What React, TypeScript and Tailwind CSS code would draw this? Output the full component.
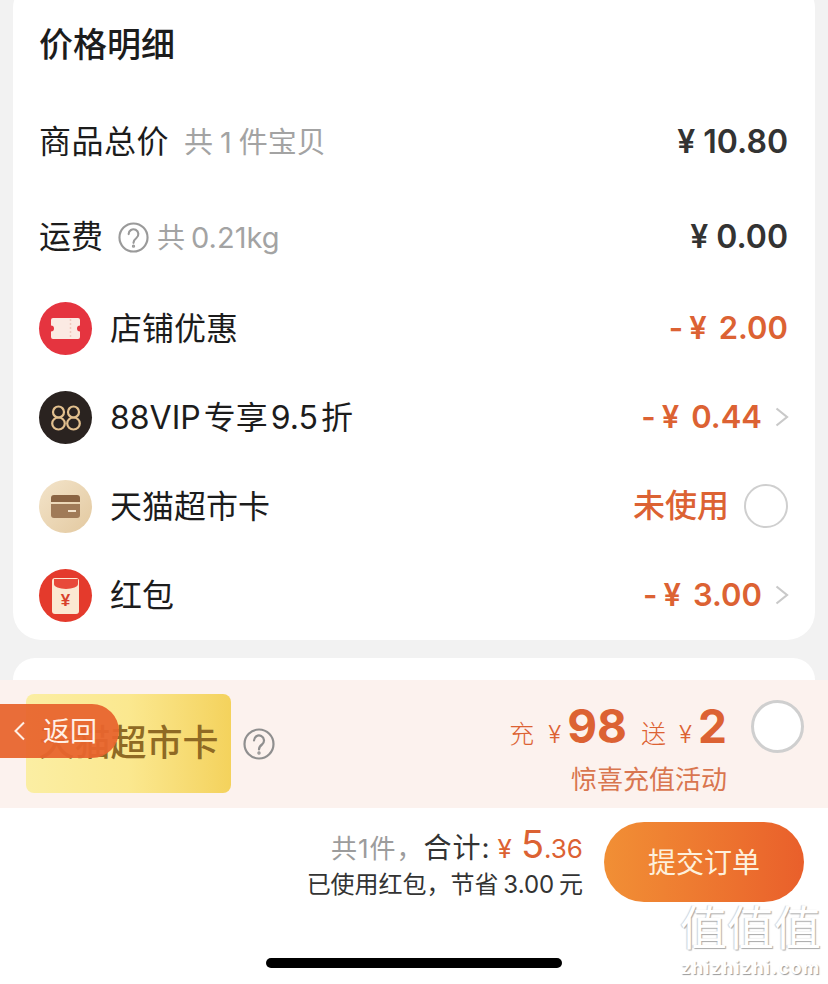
import React from 'react';

const FONT = "font-['Inter','Noto_Sans_CJK_SC',sans-serif]";

const Chevron = () => (
  <svg width="14" height="22" viewBox="0 0 14 22" fill="none" className="ml-[13px] mr-[-1px] mb-[2px]">
    <path d="M1.5 2.5 L12 11 L1.5 19.5" stroke="#c9c9c9" strokeWidth="2.2" />
  </svg>
);

const TicketIcon = () => (
  <div className="w-[53px] h-[53px] rounded-full bg-[#e5343f] flex items-center justify-center shrink-0">
    <svg width="29" height="21" viewBox="0 0 29 21">
      <path d="M2 0 H27 a2 2 0 0 1 2 2 V7.5 a3 3 0 0 0 0 6 V19 a2 2 0 0 1 -2 2 H2 a2 2 0 0 1 -2 -2 V13.500 a3 3 0 0 0 0 -6 V2 a2 2 0 0 1 2 -2 Z" fill="#fbeae3" />
      <path d="M19.500 1 V20" stroke="#efcabf" strokeWidth="1.5" strokeDasharray="2 2" />
    </svg>
  </div>
);

const VipIcon = () => (
  <div className="w-[53px] h-[53px] rounded-full bg-[#2a2320] flex items-center justify-center shrink-0">
    <svg width="30" height="26" viewBox="0 0 30 26" fill="none" stroke="#e2c08e" strokeWidth="2.2">
      <ellipse cx="7.500" cy="7" rx="5.500" ry="5.500" />
      <ellipse cx="7.500" cy="18.500" rx="6.300" ry="6" />
      <ellipse cx="22.500" cy="7" rx="5.500" ry="5.500" />
      <ellipse cx="22.500" cy="18.500" rx="6.300" ry="6" />
    </svg>
  </div>
);

const CardIcon = () => (
  <div className="w-[53px] h-[53px] rounded-full bg-gradient-to-br from-[#f3e4ca] to-[#e3c9a0] flex items-center justify-center shrink-0">
    <svg width="29" height="23" viewBox="0 0 29 23">
      <path d="M3 0 H26 a3 3 0 0 1 3 3 V7 H0 V3 a3 3 0 0 1 3 -3 Z" fill="#8a6443" />
      <path d="M0 9 H29 V20 a3 3 0 0 1 -3 3 H3 a3 3 0 0 1 -3 -3 Z" fill="#a07b58" />
      <rect x="17" y="15" width="8" height="2" fill="#f2e3cc" />
    </svg>
  </div>
);

const PacketIcon = () => (
  <div className="w-[53px] h-[53px] rounded-full bg-[#e43a2c] flex items-center justify-center shrink-0">
    <div className="relative w-[27px] h-[36px] rounded-[3px] bg-[#fbe8d2] overflow-hidden flex items-end justify-center pb-[5px]">
      <div className="absolute left-[1.500px] right-[1.500px] top-[1.500px] h-[10px] rounded-b-[50%] bg-[#e8493a]" />
      <span className="text-[17px] leading-[17px] font-bold text-[#d8402c] font-['Liberation_Sans',sans-serif]">¥</span>
    </div>
  </div>
);

const Help = ({ size, color }: { size: number; color: string }) => (
  <svg width={size} height={size} viewBox="0 0 32 32" fill="none" stroke={color} strokeWidth="2.2">
    <circle cx="16" cy="16" r="14.500" />
    <path d="M11 12.500 a5 5 0 1 1 8 4 c-2 1.500 -3 2.300 -3 5" strokeLinecap="round" />
    <circle cx="16" cy="25" r="0.600" fill={color} />
  </svg>
);

const DiscountRow = ({ icon, label, right }: { icon: React.ReactNode; label: string; right: React.ReactNode }) => (
  <div className="h-[89px] flex items-center justify-between">
    <div className="flex items-center gap-[18px]">
      {icon}
      <span className="text-[32px] leading-none text-[#1c1c1c] [word-spacing:-6px]">{label}</span>
    </div>
    <div className="flex items-center">{right}</div>
  </div>
);

const Amount = ({ value }: { value: string }) => (
  <span className="mb-[2px] text-[31px] leading-none font-semibold text-[#dc6233] flex items-center">
    <span>-</span>
    <span className="ml-[6px] mr-[12px]">¥</span>
    <span>{value}</span>
  </span>
);

const Radio = ({ className }: { className: string }) => (
  <div className={`rounded-full border-[2px] border-[#cfcfcf] bg-white ${className}`} />
);

export default function App() {
  return (
    <div className={`relative w-[828px] h-[984px] overflow-hidden bg-[#f2f2f2] flex flex-col ${FONT}`}>
      {/* price card */}
      <div className="mx-[13px] mt-[-20px] h-[660px] shrink-0 bg-white rounded-[28px] pl-[26px] pr-[27px]">
        <h2 className="pt-[43px] text-[34px] leading-[44px] font-medium text-[#1c1c1c]">价格明细</h2>
        <div className="mt-[27px] h-[96px] flex items-center justify-between">
          <div className="flex items-center gap-[15px]">
            <span className="text-[32px] leading-none text-[#1c1c1c] tracking-[0.5px]">商品总价</span>
            <span className="text-[29px] leading-none text-[#a3a3a3]">共<span className="mx-[7px]">1</span>件宝贝</span>
          </div>
          <span className="text-[32px] leading-none font-semibold text-[#333333]">¥ 10.80</span>
        </div>
        <div className="h-[94px] flex items-center justify-between">
          <div className="flex items-center">
            <span className="text-[32px] leading-none text-[#1c1c1c] mt-[-1px]">运费</span>
            <span className="ml-[15px]"><Help size={31} color="#9a9a9a" /></span>
            <span className="ml-[8px] text-[28px] leading-none text-[#a3a3a3]">共<span className="ml-[6px] text-[29px]">0.21kg</span></span>
          </div>
          <span className="text-[32px] leading-none font-semibold text-[#333333]">¥ 0.00</span>
        </div>
        <DiscountRow icon={<TicketIcon />} label="店铺优惠" right={<Amount value="2.00" />} />
        <DiscountRow icon={<VipIcon />} label="88VIP 专享 9.5 折" right={<><Amount value="0.44" /><Chevron /></>} />
        <DiscountRow
          icon={<CardIcon />}
          label="天猫超市卡"
          right={
            <div className="flex items-center mb-[2px]">
              <span className="text-[32px] leading-none font-medium text-[#dc6233]">未使用</span>
              <Radio className="ml-[15px] w-[44px] h-[44px]" />
            </div>
          }
        />
        <DiscountRow icon={<PacketIcon />} label="红包" right={<><Amount value="3.00" /><Chevron /></>} />
      </div>

      {/* next card peeking out under the promo */}
      <div className="mx-[13px] mt-[18px] h-[22px] shrink-0 bg-white rounded-t-[28px]" />

      {/* recharge promo */}
      <div className="h-[128px] shrink-0 bg-[#fcf2ee] flex items-center justify-between pl-[26px] pr-[24px]">
        <div className="flex items-center gap-[12px]">
          <div className="w-[205px] h-[99px] mb-[2px] rounded-[8px] bg-gradient-to-r from-[#fbeea3] via-[#fbe88f] to-[#f4d25c] flex items-center justify-center">
            <span className="text-[36px] leading-none font-medium text-[#8f6a24]">天猫超市卡</span>
          </div>
          <span className="block mb-[1px]"><Help size={32} color="#8f8f8f" /></span>
        </div>
        <div className="flex items-start gap-[24px]">
          <div className="flex flex-col items-end mt-[8px]">
            <div className="flex items-baseline text-[#dc6233] h-[52px]">
              <span className="text-[25px] font-light">充</span>
              <span className="ml-[14px] text-[24px] font-light">¥</span>
              <span className="ml-[6px] text-[46px] leading-[52px] font-bold">98</span>
              <span className="ml-[14px] text-[25px] font-light">送</span>
              <span className="ml-[13px] text-[24px] font-light">¥</span>
              <span className="ml-[6px] text-[46px] leading-[52px] font-bold">2</span>
            </div>
            <span className="mt-[11px] text-[26px] leading-[34px] text-[#d9764f]">惊喜充值活动</span>
          </div>
          <Radio className="w-[53px] h-[53px] mt-[8px] border-[3px]" />
        </div>
      </div>

      {/* checkout bar */}
      <div className="flex-1 bg-white relative">
        <div className="flex items-start justify-end pt-[14px] pr-[24px] gap-[21px]">
          <div className="flex flex-col items-end">
            <div className="flex items-baseline h-[50px] mt-[-3px]">
              <span className="text-[26px] text-[#9c9c9c] tracking-[1px]">共1件，</span>
              <span className="text-[28px] text-[#333333] tracking-[1px]">合计:</span>
              <span className="ml-[7px] text-[26px] text-[#dc6233]">¥</span>
              <span className="ml-[9px] text-[38px] leading-[50px] text-[#dc6233]">5</span>
              <span className="text-[26px] text-[#dc6233]">.36</span>
            </div>
            <span className="mt-[1px] text-[24px] leading-[30px] text-[#333333] [word-spacing:-2px]">已使用红包，节省 3.00 元</span>
          </div>
          <button className="w-[200px] h-[80px] pt-[1px] rounded-full bg-gradient-to-r from-[#f18f35] to-[#e95f2b] text-[28px] text-[#fdf0dc]">
            提交订单
          </button>
        </div>
        {/* home indicator */}
        <div className="absolute left-[266px] top-[150px] w-[296px] h-[10px] rounded-full bg-black" />
      </div>

      {/* floating back pill */}
      <div className="absolute left-0 top-[704px] w-[119px] h-[54px] rounded-r-[27px] bg-[#e8652e]/95 flex items-center pl-[13px] gap-[17px]">
        <svg width="13" height="22" viewBox="0 0 13 22" fill="none">
          <path d="M11 2.500 L2.500 11 L11 19.500" stroke="#fff0e6" strokeWidth="2" />
        </svg>
        <span className="text-[27px] leading-none text-[#fff0e6]">返回</span>
      </div>

      {/* watermark */}
      <div className="absolute right-[7px] top-[899px] flex flex-col items-center">
        <span className="text-[47px] leading-[58px] text-white [text-shadow:1px_1px_1px_#a8a8a8,-1px_0_1px_#d0d0d0]">值值值</span>
        <span className="text-[18px] leading-[22px] font-bold tracking-[1.300px] text-white [text-shadow:1px_1px_1px_#999999]">zhizhizhi.com</span>
      </div>
    </div>
  );
}
